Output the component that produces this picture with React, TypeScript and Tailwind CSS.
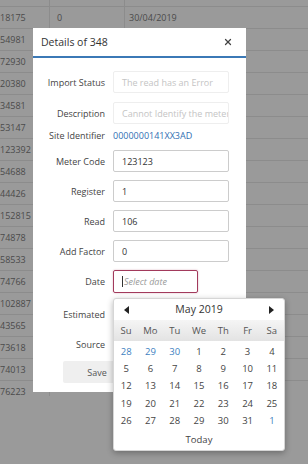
import { X } from "lucide-react";

const rows = [
  "20078", "18175", "54981", "72930", "20380", "34581", "53147", "123392", "54688",
  "44426", "152815", "74878", "58533", "74766", "102887", "43565", "73618", "74013", "76223",
];

const weeks = [
  [28, 29, 30, 1, 2, 3, 4],
  [5, 6, 7, 8, 9, 10, 11],
  [12, 13, 14, 15, 16, 17, 18],
  [19, 20, 21, 22, 23, 24, 25],
  [26, 27, 28, 29, 30, 31, 1],
];

function Label({ children }: { children: React.ReactNode }) {
  return <div className="w-[72px] shrink-0 text-right text-[9px] leading-none text-[#444]">{children}</div>;
}

function Field({ label, value, muted }: { label: string; value: string; muted?: boolean }) {
  return (
    <div className="flex items-center gap-2">
      <Label>{label}</Label>
      <div
        className={
          muted
            ? "flex h-[22px] w-[116px] items-center overflow-hidden whitespace-nowrap rounded-[2px] border border-[#eeeeee] pl-[8px] text-[9px] leading-none text-[#c4c4c4]"
            : "flex h-[22px] w-[116px] items-center rounded-[2px] border border-[#cccccc] pl-[8px] text-[9px] leading-none text-[#333]"
        }
      >
        {value}
      </div>
    </div>
  );
}

function Calendar() {
  return (
    <div className="absolute left-[113px] top-[298px] w-[172px] rounded-[3px] border border-[#d6d6d6] bg-white shadow-[0_2px_6px_rgba(0,0,0,0.3)]">
      <div className="flex h-[21px] items-center justify-between px-[10px]">
        <svg width="5" height="8" viewBox="0 0 5 8">
          <polygon points="5,0 0,4 5,8" fill="#222" />
        </svg>
        <span className="text-[10.5px] leading-none text-[#333]">May 2019</span>
        <svg width="5" height="8" viewBox="0 0 5 8">
          <polygon points="0,0 5,4 0,8" fill="#222" />
        </svg>
      </div>
      <div className="grid h-[21px] grid-cols-7 items-center bg-gradient-to-b from-[#f5f5f5] to-[#e3e3e3] text-center text-[9.5px] leading-none text-[#555]">
        {["Su", "Mo", "Tu", "We", "Th", "Fr", "Sa"].map((d) => (
          <span key={d}>{d}</span>
        ))}
      </div>
      <div className="pt-[2px]">
        {weeks.map((w, wi) => (
          <div key={wi} className="grid h-[17.3px] grid-cols-7 items-center text-center text-[9.5px] leading-none text-[#444]">
            {w.map((d, di) => {
              const other = (wi === 0 && d > 20) || (wi === 4 && d < 10);
              return (
                <span key={di} className={other ? "text-[#3d7fc1]" : ""}>
                  {d}
                </span>
              );
            })}
          </div>
        ))}
      </div>
      <div className="flex h-[21px] items-center justify-center text-[9.5px] leading-none text-[#444]">Today</div>
    </div>
  );
}

export default function App() {
  return (
    <div className="relative h-[464px] w-[308px] overflow-hidden bg-[#9a9a9a] font-['Open_Sans',sans-serif]">
      {/* Table behind the overlay; only the top rows show past the modal */}
      <div className="h-[396px] overflow-hidden">
        <div className="-mt-[15px]">
          {rows.map((r, i) => (
            <div key={i} className="flex h-[22px] items-center border-b border-[#8c8c8c] text-[9px] leading-none text-[#4a4a4a]">
              <div className="flex h-full w-[50px] items-center border-r border-[#8c8c8c]">{r}</div>
              <div className="flex h-full w-[75px] items-center border-r border-[#8c8c8c] pl-[7px]">{i < 2 ? "0" : ""}</div>
              <div className="flex h-full flex-1 items-center pl-[4px]">{i < 2 ? "30/04/2019" : ""}</div>
            </div>
          ))}
        </div>
      </div>

      {/* Modal */}
      <div className="absolute left-[33px] top-[28px] h-[364px] w-[213px] bg-white">
        <div className="flex h-[30px] items-center justify-between border-b-2 border-[#3b79b6] pl-[8px] pr-[13px]">
          <span className="text-[10.5px] leading-none text-[#333]">Details of 348</span>
          <X size={10} strokeWidth={3} className="text-[#444]" />
        </div>
        <div className="flex flex-col pt-[13px]">
          <Field label="Import Status" value="The read has an Error" muted />
          <div className="mt-[9px]">
            <Field label="Description" value="Cannot Identify the meter" muted />
          </div>
          <div className="mt-[2px] flex h-[18px] items-center gap-2">
            <Label>Site Identifier</Label>
            <span className="text-[9px] leading-none text-[#2f6fb3]">0000000141XX3AD</span>
          </div>
          <div className="mt-[6px] flex flex-col gap-[8px]">
            <Field label="Meter Code" value="123123" />
            <Field label="Register" value="1" />
            <Field label="Read" value="106" />
            <Field label="Add Factor" value="0" />
          </div>
          <div className="mt-[8px] flex items-center gap-2">
            <Label>Date</Label>
            <div className="flex h-[23px] w-[85px] items-center gap-[1px] rounded-[2px] border border-[#a23a5c] pl-[8px] text-[9px] italic leading-none text-[#9a9a9a] shadow-[0_0_2px_rgba(162,58,92,0.4)]">
              <span className="h-[11px] w-px bg-[#333]" />
              <span>Select date</span>
            </div>
          </div>
          <div className="mt-[10px] flex h-[22px] items-center gap-2">
            <Label>Estimated</Label>
          </div>
          <div className="mt-[8px] flex h-[22px] items-center gap-2">
            <Label>Source</Label>
          </div>
          <div className="mt-[6px] pl-[30px]">
            <div className="flex h-[22px] w-[68px] items-center justify-center rounded-[2px] bg-[#efefef] text-[9px] leading-none text-[#555]">
              Save
            </div>
          </div>
        </div>
      </div>

      <Calendar />
    </div>
  );
}
